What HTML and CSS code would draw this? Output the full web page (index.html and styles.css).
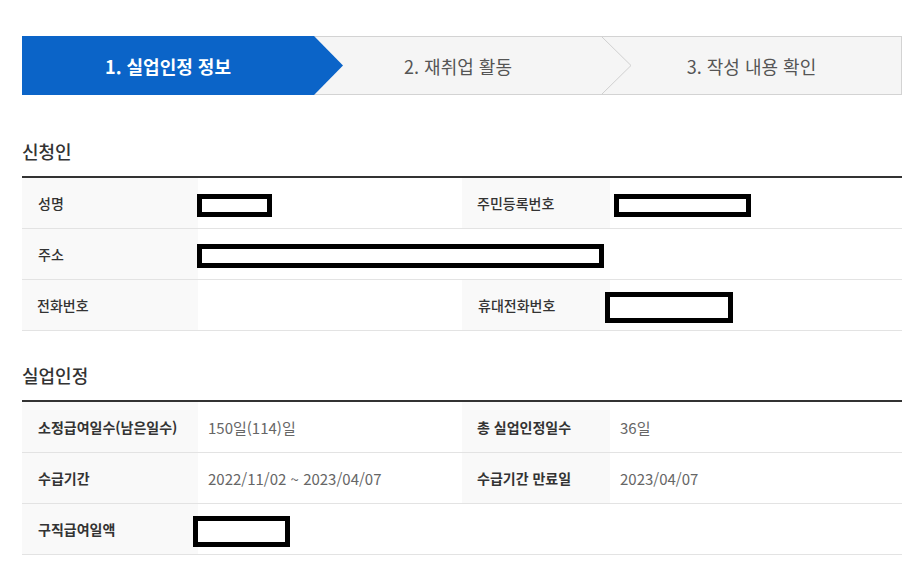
FILE: index.html
```html
<!DOCTYPE html>
<html lang="ko">
<head>
    <meta charset="utf-8">
    <title>실업인정 신청</title>
    <link rel="stylesheet" href="styles.css">
</head>
<body>
    <div class="page">
        <!-- 단계 표시 -->
        <div class="steps">
            <div class="step step-on">
                1. 실업인정 정보
                <svg class="step-tip" viewBox="0 0 29 59" preserveAspectRatio="none"><polygon points="0,0 29,29.5 0,59" fill="#0b64c8"/></svg>
            </div>
            <div class="step">
                2. 재취업 활동
                <svg class="step-sep" viewBox="0 0 30 59" preserveAspectRatio="none"><polyline points="0,0 29,29.5 0,59" fill="#f5f5f5" stroke="#cfcfcf" stroke-width="1"/></svg>
            </div>
            <div class="step">3. 작성 내용 확인</div>
        </div>

        <h3 class="sec-title">신청인</h3>
        <div class="info-table">
            <div class="cell th">성명</div>
            <div class="cell td"><span class="mask m-name"></span></div>
            <div class="cell th">주민등록번호</div>
            <div class="cell td"><span class="mask m-rrn"></span></div>

            <div class="cell th">주소</div>
            <div class="cell td span3"><span class="mask m-addr"></span></div>

            <div class="cell th">전화번호</div>
            <div class="cell td"></div>
            <div class="cell th">휴대전화번호</div>
            <div class="cell td"><span class="mask m-mobile"></span></div>
        </div>

        <h3 class="sec-title">실업인정</h3>
        <div class="info-table bold-th">
            <div class="cell th">소정급여일수(남은일수)</div>
            <div class="cell td">150일(114)일</div>
            <div class="cell th">총 실업인정일수</div>
            <div class="cell td">36일</div>

            <div class="cell th">수급기간</div>
            <div class="cell td">2022/11/02 ~ 2023/04/07</div>
            <div class="cell th">수급기간 만료일</div>
            <div class="cell td">2023/04/07</div>

            <div class="cell th">구직급여일액</div>
            <div class="cell td span3"><span class="mask m-amount"></span></div>
        </div>
    </div>
</body>
</html>
```
FILE: styles.css
```css
body {
    margin: 0;
    font-family: "Noto Sans CJK KR", "Noto Sans", sans-serif;
    background-color: #fff;
    color: #333;
}

.page {
    padding: 36px 21px 0 22px;
}

/* steps */
.steps {
    display: grid;
    grid-template-columns: 291px 288px 1fr;
    height: 57px;
    border: 1px solid #d3d3d3;
    background-color: #f5f5f5;
}

.step {
    position: relative;
    display: flex;
    align-items: center;
    justify-content: center;
    font-size: 18px;
    color: #555;
}

.step-on {
    margin: -1px 0 -1px -1px;
    background-color: #0b64c8;
    color: #fff;
    font-weight: bold;
    z-index: 2;
}

.step-tip,
.step-sep {
    position: absolute;
    top: 0;
    left: 100%;
    width: 29px;
    height: 100%;
}

.step-sep {
    width: 30px;
    z-index: 1;
}

/* sections */
.sec-title {
    margin: 43px 0 12px;
    font-size: 18px;
    font-weight: 500;
    line-height: 26px;
    color: #333;
}

.info-table + .sec-title {
    margin-top: 31px;
}

.info-table {
    display: grid;
    grid-template-columns: 176px 264px 148px 1fr;
    border-top: 2px solid #333;
}

.cell {
    display: flex;
    align-items: center;
    height: 50px;
    border-bottom: 1px solid #e3e3e3;
    font-size: 14px;
}

.th {
    padding-left: 16px;
    background-color: #f9f9f9;
    color: #333;
    font-weight: 500;
}

.info-table .th:nth-child(4n+3) {
    padding-left: 15px;
}

.bold-th .th {
    font-weight: bold;
}

.td {
    padding-left: 10px;
    color: #666;
    font-size: 15px;
}

.span3 {
    grid-column: span 3;
}

/* 가림 처리 */
.mask {
    display: inline-block;
    box-sizing: border-box;
    margin-top: 4px;
    border: 5px solid #000;
    background-color: #fff;
}

.m-name {
    width: 75px;
    height: 23px;
    margin-left: -11px;
}

.m-rrn {
    width: 137px;
    height: 23px;
    margin-left: -6px;
}

.m-addr {
    width: 407px;
    height: 24px;
    margin-left: -11px;
}

.m-mobile {
    width: 128px;
    height: 31px;
    margin-left: -15px;
}

.m-amount {
    width: 97px;
    height: 31px;
    margin-left: -15px;
}
```
